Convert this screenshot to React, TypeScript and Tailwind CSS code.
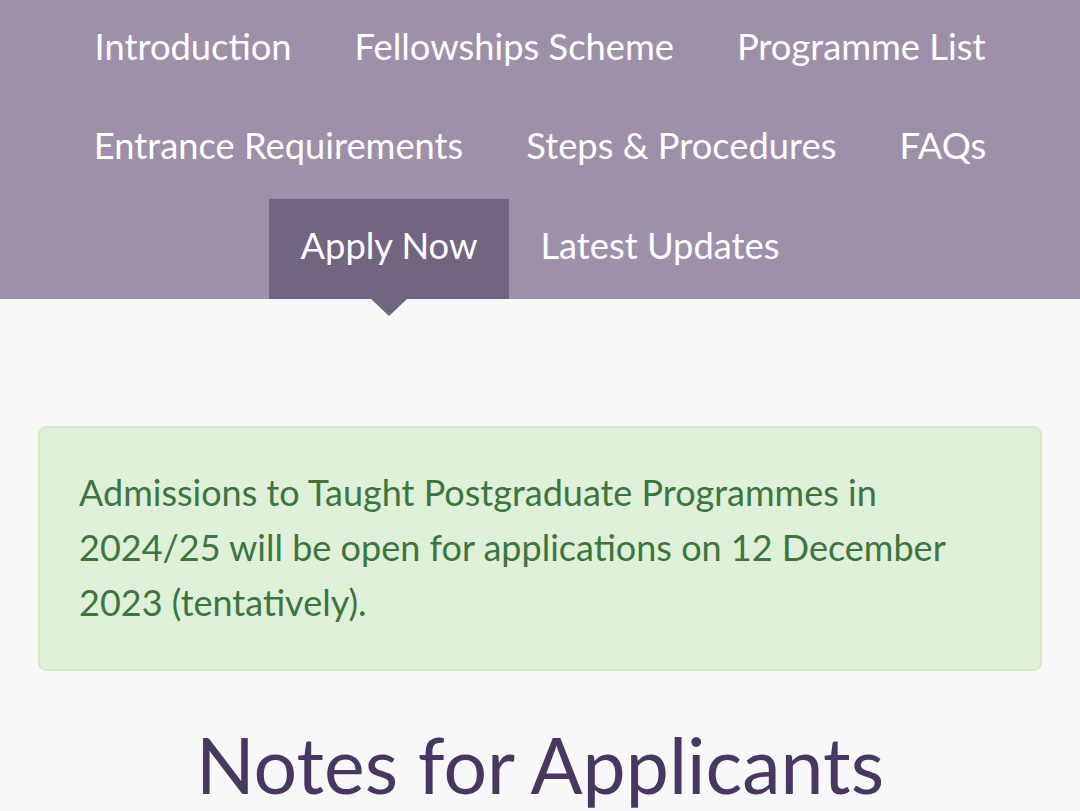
const navItems = [
  "Introduction",
  "Fellowships Scheme",
  "Programme List",
  "Entrance Requirements",
  "Steps & Procedures",
  "FAQs",
  "Apply Now",
  "Latest Updates",
];

export default function App() {
  return (
    <div
      className="min-h-[811px] bg-[#f8f8f8] overflow-hidden"
      style={{ fontFamily: "Lato, 'Open Sans', sans-serif" }}
    >
      <nav className="bg-[#9e90a8] flex flex-wrap justify-center">
        {navItems.map((item) => {
          const active = item === "Apply Now";
          return (
            <a
              key={item}
              href="#"
              className={
                "relative h-[99.5px] flex items-center px-[31.5px] pb-[8px] text-[36.3px] leading-[40px] text-white " +
                (active ? "bg-[#726580]" : "")
              }
            >
              {item}
              {active && (
                <span className="absolute left-1/2 top-full -translate-x-1/2 w-0 h-0 border-l-[18px] border-r-[18px] border-t-[17px] border-l-transparent border-r-transparent border-t-[#726580]" />
              )}
            </a>
          );
        })}
      </nav>

      <div className="px-[38px] pt-[127px]">
        <div className="rounded-[8px] border-2 border-[#d6e9c6] bg-[#dff0d8] pl-[39px] pr-[30px] pt-[37px] pb-[39px] text-[36px] leading-[55px] text-[#3c763d]">
          Admissions to Taught Postgraduate Programmes in 2024/25 will be open for applications on 12
          December 2023 (tentatively).
        </div>

        <h1 className="mt-[48px] text-center text-[77px] leading-[90px] text-[#4a3761]">
          Notes for Applicants
        </h1>
      </div>
    </div>
  );
}
